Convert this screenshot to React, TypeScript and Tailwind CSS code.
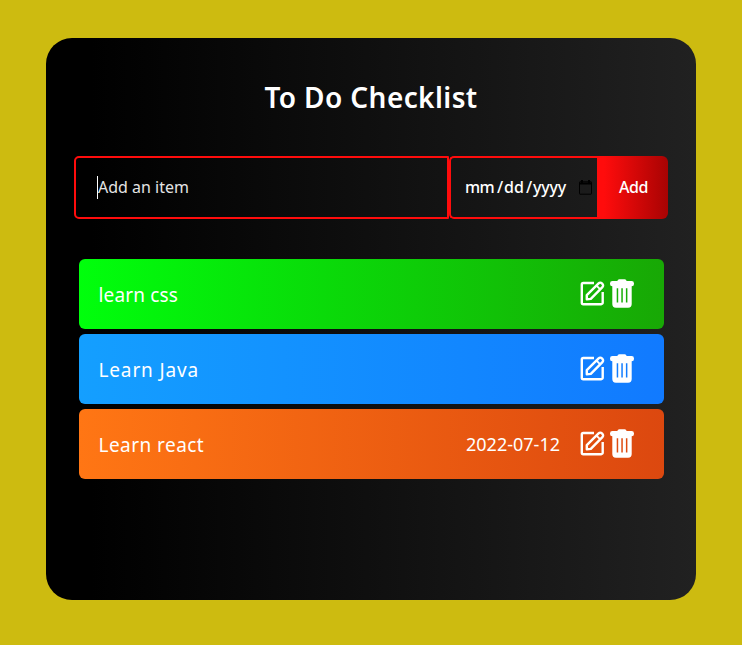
import type { ReactNode } from 'react';

interface Todo {
  title: string;
  titleClass: string;
  date?: string;
  color: string;
}

const todos: Todo[] = [
  { title: 'learn css', titleClass: 'tracking-[0.15px]', color: 'bg-[linear-gradient(90deg,#00ff0c_0%,#18a805_100%)]' },
  { title: 'Learn Java', titleClass: 'tracking-[0.85px]', color: 'bg-[linear-gradient(90deg,#149fff_0%,#117aff_100%)]' },
  { title: 'Learn react', titleClass: 'tracking-[0.45px]', date: '2022-07-12', color: 'bg-[linear-gradient(90deg,#ff7614_0%,#dc480f_100%)]' },
];

function EditIcon() {
  return (
    <svg width="30" height="30" viewBox="0 0 30 30" fill="none" stroke="#fff" strokeWidth="2.4" strokeLinejoin="round">
      <path d="M17 5H6.300A1.500 1.500 0 0 0 4.800 6.500v18.200a1.500 1.500 0 0 0 1.500 1.500h17.900a1.500 1.500 0 0 0 1.500-1.500V14" />
      <path d="M9.800 21.300v-4.200L21.600 5.300a2.300 2.300 0 0 1 3.300 0l.5.5a2.300 2.300 0 0 1 0 3.300L13.800 20.900Z" />
      <path d="m19.400 7.500 3.800 3.800" strokeWidth="1.800" />
    </svg>
  );
}

function TrashIcon() {
  return (
    <svg width="30" height="30" viewBox="0 0 30 30" fill="none">
      <path
        fill="#fff"
        d="M12.300.2h5.400c1 0 1.700.7 1.800 1.800h5.100a2.400 2.400 0 0 1 2.400 2.400v.5a2.300 2.300 0 0 1-2.300 2.300v17.900a3.600 3.600 0 0 1-3.600 3.600H8.900a3.600 3.600 0 0 1-3.600-3.600V7.200A2.300 2.300 0 0 1 3 4.900v-.5A2.400 2.400 0 0 1 5.400 2h5.100c.1-1.100.8-1.800 1.800-1.800ZM9.700 9.300v14.200h1.500V9.300Zm4.600 0v14.200h1.500V9.300Zm4.600 0v14.200h1.500V9.300Z"
        fillRule="evenodd"
      />
    </svg>
  );
}

function TodoRow({ todo }: { todo: Todo }) {
  return (
    <li className={`flex h-[70px] items-center rounded-md pl-[19.5px] pr-[27px] text-white ${todo.color}`}>
      <span className={`pt-px text-[19px] leading-7 ${todo.titleClass}`}>{todo.title}</span>
      <span className="ml-auto mr-[17px] text-[18px]">{todo.date}</span>
      <button type="button" aria-label="Edit" className="pb-[2px]"><EditIcon /></button>
      <button type="button" aria-label="Delete"><TrashIcon /></button>
    </li>
  );
}

function Part({ className, children }: { className: string; children: ReactNode }) {
  return <span className={`inline-block pb-0.5 ${className}`}>{children}</span>;
}

export default function App() {
  return (
    <div className="h-[645px] w-[742px] bg-[#cdbb10] pt-[38px] font-['Noto_Sans',sans-serif]">
      <main className="ml-[46px] h-[562px] w-[650px] rounded-[26px] bg-[linear-gradient(90deg,#000000_7%,#212121_100%)] pt-[38px] text-white">
        <h1 className="text-center text-[28px] font-semibold leading-[42px] tracking-[0.4px]">To Do Checklist</h1>
        <form className="ml-7 mt-[38px] flex h-[63px] w-[594px]">
          <div className="flex w-[375px] items-center rounded-l-[5px] rounded-r-[1px] border-2 border-[#ff0c0c] pl-[21px]">
            <span className="h-[23px] w-px bg-white" />
            <span className="pb-0.5 text-[16px] text-[#e4e4e4]">Add an item</span>
          </div>
          <div className="flex w-[149px] items-center rounded-l-[5px] border-2 border-r-0 border-[#ff0c0c] pl-3.5 text-[16px] font-medium">
            <Part className="w-8 tracking-[-0.6px]">mm</Part>
            <Part className="w-[7px]">/</Part>
            <Part className="w-[22px]">dd</Part>
            <Part className="w-[7px]">/</Part>
            <Part className="w-11 tracking-[-0.2px]">yyyy</Part>
            <svg className="ml-0.5" width="13" height="15" viewBox="0 0 13 15" fill="none" stroke="#000">
              <rect x=".5" y="1.8" width="12" height="12.4" rx=".5" />
              <path d="M.5 3.5h12M3 0v3M10 0v3" strokeWidth="2" />
            </svg>
          </div>
          <button type="button" className="-ml-px flex-1 rounded-r-md bg-[linear-gradient(90deg,#ff0c0c_10%,#a80303_100%)] pb-0.5 pl-0.5 text-[16px] font-medium tracking-[-0.4px]">
            Add
          </button>
        </form>
        <ul className="ml-[33px] mt-10 flex w-[585px] flex-col gap-[5px]">
          {todos.map((todo) => (
            <TodoRow key={todo.title} todo={todo} />
          ))}
        </ul>
      </main>
    </div>
  );
}
